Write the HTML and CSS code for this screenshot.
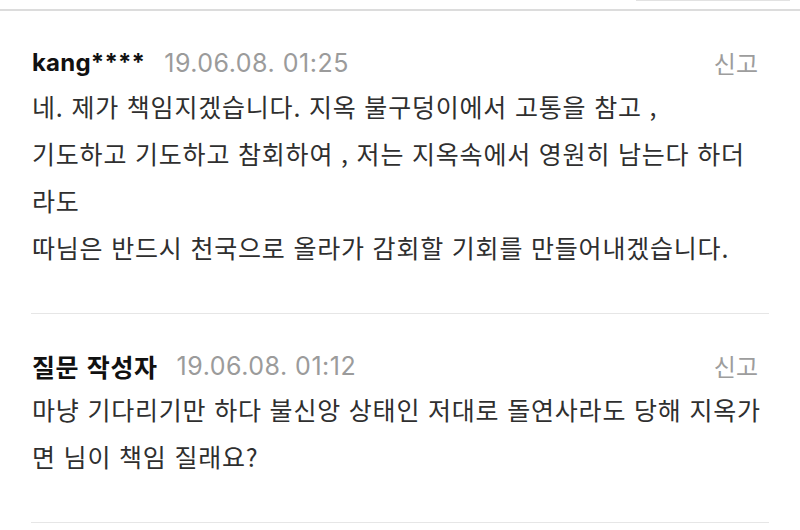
FILE: index.html
```html
<!DOCTYPE html>
<html lang="ko">
<head>
<meta charset="utf-8">
<title>댓글</title>
<link rel="stylesheet" href="styles.css">
</head>
<body>
<div class="topbar">
  <div class="topbar-box"></div>
</div>
<ul class="comments">
  <li class="comment">
    <div class="comment-head">
      <span class="author">kang****</span>
      <span class="date">19.06.08. 01:25</span>
      <a class="report">신고</a>
    </div>
    <p class="comment-body">네. 제가 책임지겠습니다. 지옥 불구덩이에서 고통을 참고 ,<br>기도하고 기도하고 참회하여 , 저는 지옥속에서 영원히 남는다 하더<br>라도<br>따님은 반드시 천국으로 올라가 감회할 기회를 만들어내겠습니다.</p>
  </li>
  <li class="comment">
    <div class="comment-head">
      <span class="author author-ko">질문 작성자</span>
      <span class="date">19.06.08. 01:12</span>
      <a class="report">신고</a>
    </div>
    <p class="comment-body">마냥 기다리기만 하다 불신앙 상태인 저대로 돌연사라도 당해 지옥가<br>면 님이 책임 질래요?</p>
  </li>
</ul>
</body>
</html>
```
FILE: styles.css
```css
html, body {
  margin: 0;
  padding: 0;
  background: #ffffff;
}

body {
  font-family: "Noto Sans CJK KR", "Noto Sans", sans-serif;
  color: #2e2e2e;
  width: 800px;
  overflow: hidden;
}

.topbar {
  height: 9px;
  border-bottom: 2px solid #dcdcdc;
}

.topbar-box {
  width: 154px;
  height: 0;
  margin-left: 636px;
  border-bottom: 1px solid #e2e2e2;
}

.comments {
  list-style: none;
  margin: 0;
  padding: 0 31px;
}

.comment {
  padding: 37px 0 42px 1px;
  border-bottom: 1px solid #e6e6e6;
}

.comment-head {
  display: flex;
  align-items: center;
  height: 30px;
  line-height: 30px;
}

.author {
  font-family: "Inter", "Noto Sans CJK KR", sans-serif;
  font-weight: 700;
  font-size: 24px;
  color: #111111;
  letter-spacing: 0.2px;
}

.author-ko {
  font-family: "Noto Sans CJK KR", sans-serif;
  font-size: 25px;
  letter-spacing: 0.6px;
}

.date {
  font-family: "Inter", "Noto Sans", sans-serif;
  font-size: 25px;
  color: #9b9b9b;
  margin-left: 19px;
  letter-spacing: 0.5px;
}

.report {
  margin-left: auto;
  margin-right: 11px;
  font-size: 24px;
  color: #9d9d9d;
}

.comment-body {
  margin: 5px 0 0;
  font-size: 25px;
  line-height: 47px;
  letter-spacing: 0.8px;
  white-space: nowrap;
  color: #2f2f2f;
}
```
